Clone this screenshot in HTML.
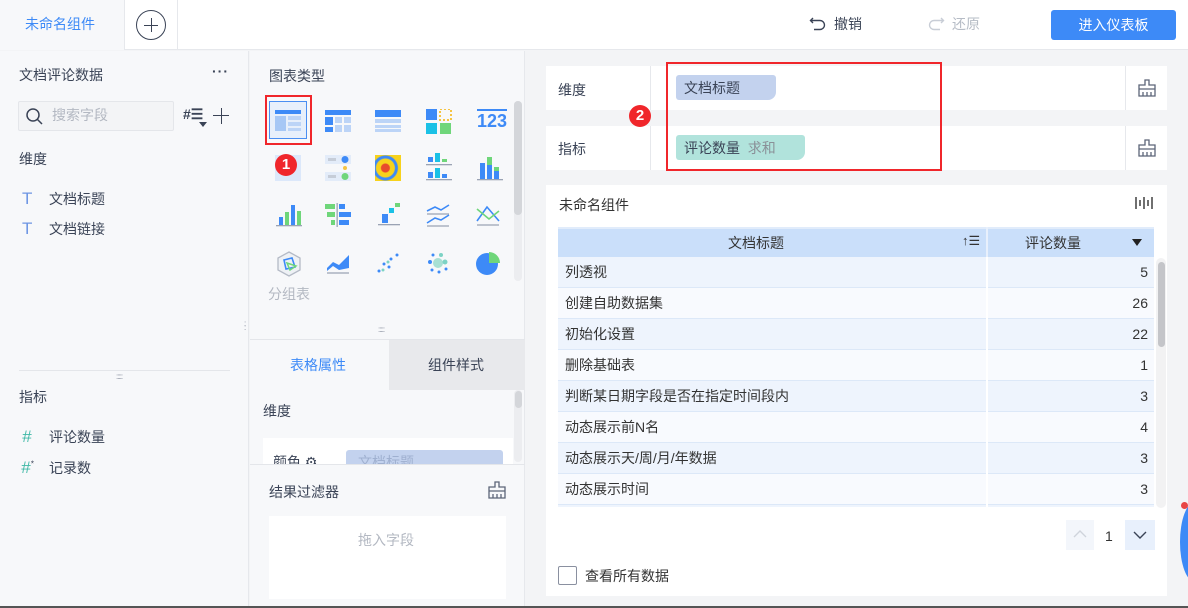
<!DOCTYPE html>
<html><head><meta charset="utf-8"><style>
*{margin:0;padding:0;box-sizing:border-box}
body{width:1188px;height:608px;overflow:hidden;background:#f3f4f6;font-family:"Liberation Sans","Noto Sans CJK SC",sans-serif;font-size:14px;line-height:1.2;color:#333;position:relative}
.a{position:absolute}
.t{white-space:nowrap}
.ic{position:absolute;width:26px;height:26px}
</style></head><body>
<!-- top bar -->
<div class="a" style="left:0;top:0;width:1188px;height:50px;background:#fff;border-bottom:1px solid #e6e8ec"></div>
<div class="a" style="left:0;top:0;width:125px;height:50px;background:#f7f8fa;border-right:1px solid #e6e8ec"></div>
<div class="a t" style="left:25px;top:16px;color:#3d8af7">未命名组件</div>
<div class="a" style="left:177px;top:0;width:1px;height:50px;background:#e6e8ec"></div>
<div class="a" style="left:136px;top:10px;width:30px;height:30px;border:1.3px solid #3a4356;border-radius:50%"></div>
<div class="a" style="left:144px;top:24.5px;width:14px;height:1.3px;background:#3a4356"></div>
<div class="a" style="left:150.5px;top:18px;width:1.3px;height:14px;background:#3a4356"></div>
<svg class="a" style="left:809px;top:15px" width="18" height="18" viewBox="0 0 18 18"><path d="M4 3 L1.5 5.5 L4 8 M1.5 5.5 H11 a4.5 4.5 0 0 1 0 9 H5" fill="none" stroke="#3a4356" stroke-width="1.4"/></svg>
<div class="a t" style="left:834px;top:16px;color:#3a4356">撤销</div>
<svg class="a" style="left:927px;top:15px" width="18" height="18" viewBox="0 0 18 18"><path d="M14 3 L16.5 5.5 L14 8 M16.5 5.5 H7 a4.5 4.5 0 0 0 0 9 H13" fill="none" stroke="#c8cdd6" stroke-width="1.4"/></svg>
<div class="a t" style="left:952px;top:16px;color:#b6bcc6">还原</div>
<div class="a t" style="left:1051px;top:10px;width:125px;height:30px;background:#3d8af7;border-radius:3px;color:#fff;text-align:center;line-height:30px">进入仪表板</div>

<!-- left panel -->
<div class="a" style="left:0;top:51px;width:249px;height:556px;background:#f7f8fa;border-right:1px solid #e6e8ec"></div>
<div class="a t" style="left:19px;top:67px;color:#3a4356">文档评论数据</div>
<div class="a t" style="left:212px;top:63px;color:#3a4356;font-weight:bold;letter-spacing:1px">···</div>
<div class="a" style="left:18px;top:101px;width:156px;height:30px;background:#f3f4f6;border:1px solid #e4e6ea;border-radius:2px"></div>
<svg class="a" style="left:25px;top:107px" width="19" height="19" viewBox="0 0 19 19"><circle cx="8" cy="8" r="6" fill="none" stroke="#3a4356" stroke-width="1.5"/><path d="M12.5 12.5 L17 17" stroke="#3a4356" stroke-width="1.5"/></svg>
<div class="a t" style="left:52px;top:107px;color:#b3b8c2">搜索字段</div>
<div class="a t" style="left:183px;top:106px;font-size:14px;color:#3a4356;font-weight:bold">#☰</div>
<div class="a" style="left:199px;top:122px;width:0;height:0;border-left:4px solid transparent;border-right:4px solid transparent;border-top:5px solid #3a4356"></div>
<div class="a" style="left:213px;top:115px;width:16px;height:1.4px;background:#3a4356"></div>
<div class="a" style="left:220.5px;top:108px;width:1.4px;height:16px;background:#3a4356"></div>
<div class="a t" style="left:19px;top:151px;color:#3a4356">维度</div>
<div class="a t" style="left:22px;top:189px;color:#6d95e3;font-size:17px">T</div>
<div class="a t" style="left:49px;top:191px;color:#3a4356">文档标题</div>
<div class="a t" style="left:22px;top:219px;color:#6d95e3;font-size:17px">T</div>
<div class="a t" style="left:49px;top:221px;color:#3a4356">文档链接</div>
<div class="a" style="left:19px;top:370px;width:211px;height:1px;background:#e4e6ea"></div>
<div class="a t" style="left:116px;top:372px;color:#8a90a0;font-size:8px;letter-spacing:-1px">:::::</div>
<div class="a t" style="left:19px;top:389px;color:#3a4356">指标</div>
<div class="a t" style="left:22px;top:427px;color:#3fb8a6;font-size:17px;font-style:italic">#</div>
<div class="a t" style="left:49px;top:429px;color:#3a4356">评论数量</div>
<div class="a t" style="left:21px;top:458px;color:#3fb8a6;font-size:17px;font-style:italic">#<sup style="font-size:8px;color:#3a4356">*</sup></div>
<div class="a t" style="left:49px;top:460px;color:#3a4356">记录数</div>

<!-- middle panel -->
<div class="a" style="left:250px;top:51px;width:275px;height:556px;background:#f7f8fa;border-right:1px solid #e6e8ec"></div>
<div class="a t" style="left:269px;top:68px;color:#3a4356">图表类型</div>
<div class="a" style="left:514px;top:101px;width:8px;height:180px;background:#ecedf0;border-radius:4px"></div>
<div class="a" style="left:514px;top:101px;width:8px;height:114px;background:#d4d6da;border-radius:4px"></div>
<!-- row1 -->
<div class="a" style="left:265px;top:95px;width:47px;height:50px;border:2px solid #f0262b"></div>
<div class="a" style="left:269px;top:101px;width:38px;height:38px;border:1.5px solid #4a8ef2;background:#e7effb"></div>
<svg class="a" style="left:275px;top:110px" width="26" height="22"><rect x="0" y="0" width="26" height="4" fill="#3d8af7"/><rect x="0" y="6" width="11" height="15" fill="#a6c7f5"/><rect x="13" y="6" width="13" height="4" fill="#bcd4f7"/><rect x="13" y="12" width="13" height="4" fill="#bcd4f7"/><rect x="13" y="18" width="13" height="3" fill="#bcd4f7"/></svg>
<svg class="a" style="left:325px;top:110px" width="26" height="22"><rect x="0" y="0" width="26" height="5" fill="#3d8af7"/><rect x="0" y="7" width="8" height="8" fill="#3d8af7"/><rect x="0" y="17" width="8" height="5" fill="#3d8af7"/><rect x="10" y="7" width="7" height="6" fill="#bcd4f7"/><rect x="19" y="7" width="7" height="6" fill="#bcd4f7"/><rect x="10" y="15" width="7" height="7" fill="#bcd4f7"/><rect x="19" y="15" width="7" height="7" fill="#bcd4f7"/></svg>
<svg class="a" style="left:375px;top:110px" width="26" height="22"><rect x="0" y="0" width="26" height="7" fill="#3d8af7"/><rect x="0" y="9" width="26" height="4" fill="#bcd4f7"/><rect x="0" y="15" width="26" height="3" fill="#bcd4f7"/><rect x="0" y="19" width="26" height="3" fill="#bcd4f7"/></svg>
<svg class="a" style="left:426px;top:109px" width="26" height="26"><rect x="0" y="0" width="11" height="11" fill="#3d8af7"/><rect x="14" y="0" width="11" height="11" fill="none" stroke="#f5c443" stroke-width="2" stroke-dasharray="2 2"/><rect x="0" y="14" width="11" height="11" fill="#1bc1e6"/><rect x="14" y="14" width="11" height="11" fill="#6fd67a"/></svg>
<div class="a t" style="left:477px;top:109px;color:#3d8af7;font-size:18px;font-weight:bold;border-top:2px solid #3d8af7;line-height:20px">123</div>
<!-- row2 -->
<div class="ic" style="left:275px;top:155px;background:#dce8fa"></div>
<svg class="a" style="left:325px;top:155px" width="26" height="26"><rect x="0" y="0" width="26" height="9" fill="#e3ecf9"/><rect x="0" y="17" width="26" height="9" fill="#e3ecf9"/><circle cx="20" cy="4.5" r="3.5" fill="#3d8af7"/><circle cx="20" cy="13" r="2" fill="#f5c443"/><circle cx="20" cy="21.5" r="3.5" fill="#6fd67a"/><rect x="3" y="3" width="8" height="3" fill="#c6cdd8"/><rect x="3" y="20" width="8" height="3" fill="#c6cdd8"/></svg>
<div class="ic" style="left:375px;top:155px;background:radial-gradient(circle at 40% 50%,#e84a2c 0 4px,#f7d21c 5px 9px,#3d8af7 10px 12px,#f7d21c 13px)"></div>
<svg class="a" style="left:426px;top:153px" width="26" height="28"><rect x="2" y="4" width="5" height="5" fill="#3d8af7"/><rect x="9" y="0" width="5" height="9" fill="#1bc1e6"/><rect x="16" y="6" width="5" height="3" fill="#6fd67a"/><rect x="0" y="11" width="26" height="1.3" fill="#9aa3b4"/><rect x="2" y="19" width="5" height="6" fill="#3d8af7"/><rect x="9" y="15" width="5" height="10" fill="#1bc1e6"/><rect x="16" y="21" width="5" height="4" fill="#3d8af7"/><rect x="0" y="26" width="26" height="1.3" fill="#9aa3b4"/></svg>
<svg class="a" style="left:477px;top:153px" width="26" height="28"><rect x="3" y="10" width="5" height="16" fill="#3d8af7"/><rect x="10" y="4" width="5" height="8" fill="#6fd67a"/><rect x="10" y="12" width="5" height="14" fill="#3d8af7"/><rect x="17" y="14" width="5" height="4" fill="#6fd67a"/><rect x="17" y="18" width="5" height="8" fill="#3d8af7"/><rect x="0" y="26" width="26" height="1.3" fill="#9aa3b4"/></svg>
<!-- row3 -->
<svg class="a" style="left:276px;top:203px" width="26" height="24"><rect x="3" y="14" width="4" height="8" fill="#3d8af7"/><rect x="9" y="9" width="4" height="13" fill="#6fd67a"/><rect x="15" y="2" width="4" height="20" fill="#3d8af7"/><rect x="21" y="8" width="4" height="14" fill="#6fd67a"/><rect x="0" y="22" width="26" height="1.3" fill="#9aa3b4"/></svg>
<svg class="a" style="left:325px;top:203px" width="26" height="24"><rect x="0" y="1" width="10" height="5" fill="#6fd67a"/><rect x="14" y="1" width="6" height="5" fill="#3d8af7"/><rect x="2" y="9" width="8" height="5" fill="#6fd67a"/><rect x="14" y="9" width="12" height="5" fill="#3d8af7"/><rect x="6" y="17" width="4" height="5" fill="#6fd67a"/><rect x="14" y="17" width="10" height="5" fill="#3d8af7"/><rect x="11.5" y="0" width="1.3" height="24" fill="#9aa3b4"/></svg>
<svg class="a" style="left:376px;top:203px" width="26" height="24"><rect x="6" y="11" width="6" height="9" fill="#3d8af7"/><rect x="13" y="5" width="5" height="5" fill="#1bc1e6"/><rect x="19" y="0" width="5" height="4" fill="#6fd67a"/><rect x="2" y="21" width="22" height="1.3" fill="#9aa3b4"/></svg>
<svg class="a" style="left:425px;top:203px" width="26" height="24"><path d="M2 8 L10 4 L16 7 L24 2 M2 20 L10 15 L16 17 L24 12" fill="none" stroke="#3d8af7" stroke-width="1.6"/><path d="M2 11 H24 M2 23 H24" stroke="#9aa3b4" stroke-width="1.3"/></svg>
<svg class="a" style="left:475px;top:203px" width="26" height="24"><path d="M2 18 L12 4 L24 18" fill="none" stroke="#3d8af7" stroke-width="1.6"/><path d="M2 6 L14 16 L24 8" fill="none" stroke="#6fd67a" stroke-width="1.6"/><path d="M2 22 H24" stroke="#9aa3b4" stroke-width="1.3"/></svg>
<!-- row4 -->
<svg class="a" style="left:275px;top:250px" width="28" height="28"><path d="M14 2 L25 8 L25 20 L14 26 L3 20 L3 8Z" fill="#eef1f5" stroke="#b4bac6" stroke-width="1.3"/><path d="M9 10 L17 8 L20 17 L11 19Z" fill="none" stroke="#3d8af7" stroke-width="1.6"/><path d="M12 13 L21 16 L15 20Z" fill="none" stroke="#6fd67a" stroke-width="1.5"/></svg>
<svg class="a" style="left:325px;top:250px" width="26" height="26"><path d="M2 18 L8 12 L14 15 L24 5 L24 18 L14 20 L8 16 L2 21Z" fill="#3d8af7"/><path d="M2 23 H24" stroke="#9aa3b4" stroke-width="1.3"/></svg>
<svg class="a" style="left:375px;top:250px" width="26" height="26"><g fill="#3d8af7"><circle cx="4" cy="21" r="1.5"/><circle cx="9" cy="14" r="1.5"/><circle cx="16" cy="9" r="1.5"/><circle cx="14" cy="17" r="1.5"/><circle cx="22" cy="5" r="1.5"/></g><circle cx="13" cy="12" r="1.5" fill="#7dd3c5"/><circle cx="8" cy="20" r="1.5" fill="#7dd3c5"/></svg>
<svg class="a" style="left:425px;top:250px" width="26" height="26"><circle cx="13" cy="13" r="5" fill="#a8e0d4"/><g fill="#3d8af7"><circle cx="5" cy="12" r="2"/><circle cx="8" cy="5" r="1.5"/><circle cx="14" cy="22" r="1.5"/><circle cx="7" cy="20" r="1.5"/><circle cx="21" cy="19" r="1.5"/></g><circle cx="20" cy="12" r="2.5" fill="#7dd3c5"/><circle cx="16" cy="5" r="2" fill="#7dd3c5"/></svg>
<svg class="a" style="left:475px;top:250px" width="26" height="26"><circle cx="12" cy="14" r="11" fill="#3d8af7"/><path d="M14 2 A11 11 0 0 1 25 13 L14 13Z" fill="#6fd67a"/></svg>
<div class="a" style="left:275px;top:154px;width:22px;height:22px;border-radius:50%;background:#f0262b;color:#fff;text-align:center;line-height:22px;font-weight:bold;font-size:15px">1</div>
<div class="a t" style="left:268px;top:286px;color:#b3b8c2">分组表</div>
<div class="a" style="left:250px;top:339px;width:275px;height:1px;background:#e4e6ea"></div>
<div class="a t" style="left:378px;top:325px;color:#8a90a0;font-size:8px;letter-spacing:-1px">:::::</div>
<div class="a t" style="left:244px;top:322px;color:#8a90a0;font-size:8px;line-height:4px">:<br>:</div>
<div class="a" style="left:389px;top:340px;width:136px;height:50px;background:#e8e9ec"></div>
<div class="a t" style="left:290px;top:357px;color:#3d8af7">表格属性</div>
<div class="a t" style="left:428px;top:357px;color:#3a4356">组件样式</div>
<div class="a t" style="left:263px;top:403px;color:#3a4356">维度</div>
<div class="a" style="left:514px;top:390px;width:8px;height:72px;background:#ecedf0;border-radius:4px"></div>
<div class="a" style="left:515px;top:391px;width:7px;height:17px;background:#d4d6da;border-radius:4px"></div>
<div class="a" style="left:263px;top:438px;width:250px;height:26px;background:#fff;overflow:hidden">
<div class="a t" style="left:10px;top:16px;color:#3a4356">颜色 ⚙</div>
<div class="a" style="left:83px;top:12px;width:157px;height:20px;background:#c3d2ee;border-radius:3px"></div>
<div class="a t" style="left:95px;top:16px;color:#9fb0d0">文档标题</div>
</div>
<div class="a" style="left:250px;top:464px;width:275px;height:1px;background:#e4e6ea"></div>
<div class="a t" style="left:269px;top:484px;color:#3a4356">结果过滤器</div>
<svg class="a" style="left:487px;top:481px" width="20" height="18" viewBox="0 0 20 18"><path d="M8 1 H12 V6 H18 V17 H2 V6 H8Z M2 10 H18 M6 13 V17 M10 13 V17 M14 13 V17" fill="none" stroke="#5c6578" stroke-width="1.3"/></svg>
<div class="a" style="left:269px;top:516px;width:237px;height:83px;background:#fff"></div>
<div class="a t" style="left:358px;top:532px;color:#b3b8c2">拖入字段</div>

<!-- right panel cards -->
<div class="a" style="left:546px;top:66px;width:621px;height:44px;background:#fff"></div>
<div class="a" style="left:546px;top:126px;width:621px;height:44px;background:#fff"></div>
<div class="a t" style="left:558px;top:82px;color:#3a4356">维度</div>
<div class="a t" style="left:558px;top:141px;color:#3a4356">指标</div>
<div class="a" style="left:1125px;top:66px;width:1px;height:44px;background:#e6e8ec"></div>
<div class="a" style="left:1125px;top:126px;width:1px;height:44px;background:#e6e8ec"></div>
<svg class="a" style="left:1137px;top:79px" width="20" height="18" viewBox="0 0 20 18"><path d="M8 1 H12 V6 H18 V17 H2 V6 H8Z M2 10 H18 M6 13 V17 M10 13 V17 M14 13 V17" fill="none" stroke="#5c6578" stroke-width="1.3"/></svg>
<svg class="a" style="left:1137px;top:139px" width="20" height="18" viewBox="0 0 20 18"><path d="M8 1 H12 V6 H18 V17 H2 V6 H8Z M2 10 H18 M6 13 V17 M10 13 V17 M14 13 V17" fill="none" stroke="#5c6578" stroke-width="1.3"/></svg>
<div class="a" style="left:650px;top:66px;width:1px;height:44px;background:#e6e8ec"></div>
<div class="a" style="left:650px;top:126px;width:1px;height:44px;background:#e6e8ec"></div>
<div class="a" style="left:676px;top:75px;width:100px;height:25px;background:#c3d2ee;border-radius:3px 3px 8px 3px"></div>
<div class="a t" style="left:684px;top:80px;color:#3a4356">文档标题</div>
<div class="a" style="left:676px;top:135px;width:129px;height:25px;background:#b1e3dc;border-radius:3px 3px 8px 3px"></div>
<div class="a t" style="left:684px;top:140px;color:#3a4356">评论数量 <span style="color:#8a9098">&nbsp;求和</span></div>
<div class="a" style="left:666px;top:62px;width:276px;height:109px;border:2px solid #f0262b"></div>
<div class="a" style="left:629px;top:105px;width:22px;height:22px;border-radius:50%;background:#f0262b;color:#fff;text-align:center;line-height:22px;font-weight:bold;font-size:15px">2</div>

<!-- table card -->
<div class="a" style="left:546px;top:185px;width:621px;height:411px;background:#fff"></div>
<div class="a t" style="left:559px;top:197px;color:#333">未命名组件</div>
<svg class="a" style="left:1135px;top:196px" width="20" height="14"><path d="M1 1V13 M5 4V10 M9 1V13 M13 4V10 M17 1V13" stroke="#333" stroke-width="1.4"/></svg>
<div class="a" style="left:558px;top:227px;width:596px;height:30px;background:#cadffa;border-top:2px solid #e1ecfb"></div>
<div class="a" style="left:986px;top:227px;width:2px;height:30px;background:#e8f0fc"></div>
<div class="a t" style="left:728px;top:235px;color:#333">文档标题</div>
<div class="a t" style="left:962px;top:233px;color:#333;font-size:13px">↑☰</div>
<div class="a t" style="left:1025px;top:235px;color:#333">评论数量</div>
<div class="a" style="left:1132px;top:239px;width:0;height:0;border-left:5px solid transparent;border-right:5px solid transparent;border-top:7px solid #222"></div>
<div class="a" style="left:558px;top:257px;width:596px;height:250px;background:repeating-linear-gradient(#eef4fd 0 30px,#dce8f8 30px 31px,#f8fafe 31px 61px,#dce8f8 61px 62px)"></div>
<div class="a" style="left:986px;top:257px;width:2px;height:250px;background:#fff"></div>
<div style="position:absolute;left:565px;top:257px;line-height:31px;color:#333" class="t">列透视<br>创建自助数据集<br>初始化设置<br>删除基础表<br>判断某日期字段是否在指定时间段内<br>动态展示前N名<br>动态展示天/周/月/年数据<br>动态展示时间</div>
<div style="position:absolute;left:1100px;width:48px;text-align:right;top:257px;line-height:31px;color:#333">5<br>26<br>22<br>1<br>3<br>4<br>3<br>3</div>
<div class="a" style="left:1156px;top:258px;width:10px;height:250px;background:#f2f2f3;border-radius:5px"></div>
<div class="a" style="left:1158px;top:262px;width:7px;height:85px;background:#c4c5c9;border-radius:4px"></div>
<div class="a" style="left:1066px;top:520px;width:28px;height:30px;background:#f3f6fb"></div>
<svg class="a" style="left:1072px;top:529px" width="16" height="10"><path d="M2 8 L8 2 L14 8" fill="none" stroke="#cfd4dc" stroke-width="1.4"/></svg>
<div class="a t" style="left:1105px;top:528px;color:#333">1</div>
<div class="a" style="left:1125px;top:520px;width:30px;height:30px;background:#e8f0fc"></div>
<svg class="a" style="left:1132px;top:530px" width="16" height="10"><path d="M2 2 L8 8 L14 2" fill="none" stroke="#3a4356" stroke-width="1.4"/></svg>
<div class="a" style="left:558px;top:566px;width:19px;height:19px;border:1px solid #8a90a0;border-radius:2px;background:#fff"></div>
<div class="a t" style="left:585px;top:568px;color:#333">查看所有数据</div>
<div class="a" style="left:1180px;top:502px;width:30px;height:80px;border-radius:50%;background:#3d8af7"></div>
<div class="a" style="left:1181px;top:502px;width:7px;height:7px;border-radius:50%;background:#e84545"></div>
<div class="a" style="left:0;top:606px;width:1188px;height:2px;background:#555"></div>
</body></html>
